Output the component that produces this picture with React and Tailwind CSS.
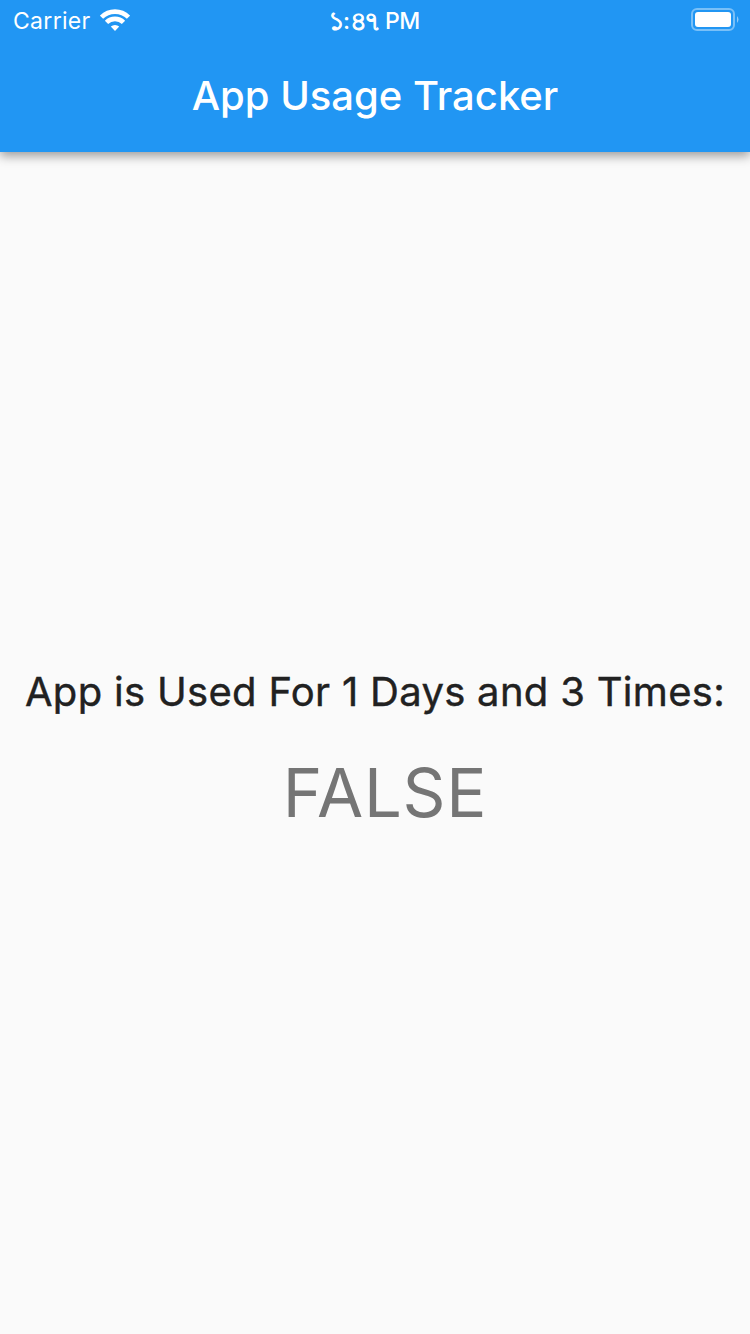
export default function App() {
  return (
    <div className="flex h-[1334px] w-[750px] flex-col overflow-hidden bg-[#fafafa] font-['Inter',sans-serif]">
      <header className="h-[152px] shrink-0 bg-[#2196f3] text-white shadow-[0_4px_10px_rgba(0,0,0,0.38)]">
        <div className="grid h-10 grid-cols-[1fr_auto_1fr] items-center pr-[11px] pl-[13px]">
          <div className="flex items-center gap-[9px]">
            <span className="pt-0.5 text-[23px] leading-[38px] tracking-[0.3px]">Carrier</span>
            <svg width="30" height="22" viewBox="0 0 30 22" fill="none" stroke="currentColor" strokeWidth="4.6">
              <path d="M1.5 8.2a19.2 19.2 0 0 1 27 0M6.5 13.4a12 12 0 0 1 17 0" />
              <path d="M15 22l-4.2-4.4a6.2 6.2 0 0 1 8.4 0z" fill="currentColor" stroke="none" />
            </svg>
          </div>
          <time className="mr-1 flex h-10 pt-0.5 text-[23px] leading-[38px] font-medium tracking-[-0.5px] whitespace-pre">
            <span className="text-[26px] font-normal tracking-[-2.3px] [-webkit-text-stroke:1.1px_white]">১</span>
            <span>:</span>
            <span className="text-[26px] font-normal tracking-[-2.3px] [-webkit-text-stroke:1.1px_white]">৪৭</span>
            <span className="pl-1.5">PM</span>
          </time>
          <svg className="justify-self-end" width="48" height="24" viewBox="0 0 48 24" fill="none">
            <rect x="1" y="1" width="42" height="21" rx="5" stroke="white" strokeOpacity=".4" strokeWidth="2" />
            <rect x="4" y="4" width="36" height="15" rx="3" fill="white" />
            <path d="M46 8q3 3.5 0 7z" fill="white" fillOpacity=".5" />
          </svg>
        </div>
        <h1 className="text-center text-[40px] leading-[112px] font-medium">App Usage Tracker</h1>
      </header>
      <main className="flex grow flex-col items-center pt-[516px]">
        <p className="text-[40px] leading-[48px] tracking-[0.3px] text-[#212121] [-webkit-text-stroke:0.4px_#212121]">App is Used For 1 Days and 3 Times:</p>
        <p className="mt-[37px] ml-5 text-[67px] leading-[80px] tracking-[0.7px] text-[#757575]">FALSE</p>
      </main>
    </div>
  );
}
